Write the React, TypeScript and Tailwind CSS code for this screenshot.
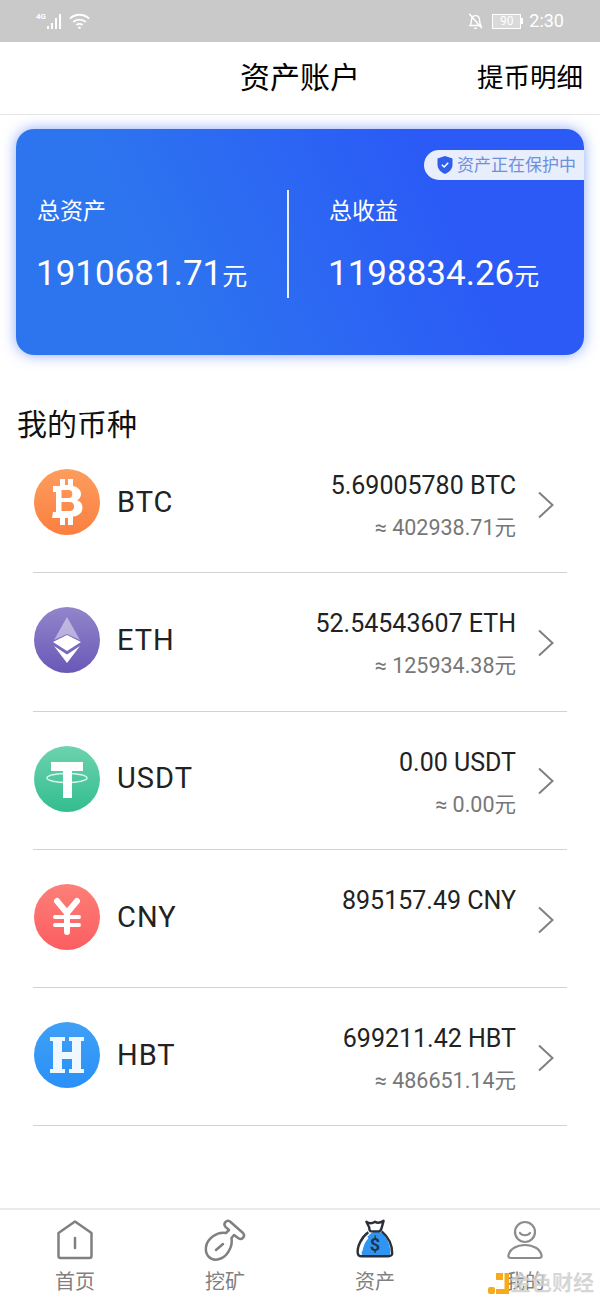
import React from 'react';

const FONT = "font-['Roboto','Noto_Sans_CJK_SC',sans-serif]";

const BtcIcon = () => (
  <svg viewBox="0 0 66 66" className="h-[66px] w-[66px]">
    <defs>
      <linearGradient id="btc" x1="0" y1="0" x2="0" y2="1">
        <stop offset="0" stopColor="#fd9d5e" />
        <stop offset="1" stopColor="#fb7f3f" />
      </linearGradient>
    </defs>
    <circle cx="33" cy="33" r="33" fill="url(#btc)" />
    <path
      fill="#fff"
      fillRule="evenodd"
      d="M26 10h5v6h3v-6h5v7c5 1 8 4 8 8 0 3-1.500 5-4 6.200 3.200 1 5.500 3.500 5.500 7.300 0 5-3.500 8.500-9.500 9V56h-5v-7h-3v7h-5v-7h-8l1-6h3V23h-3v-6h7Zm1.500 11v8H35c2 0 3.300-1.500 3.300-4s-1.300-4-3.300-4Zm0 12v9H36c2.500 0 4-1.700 4-4.500S38.500 33 36 33Z"
    />
  </svg>
);

const EthIcon = () => (
  <svg viewBox="0 0 66 66" className="h-[66px] w-[66px]">
    <defs>
      <linearGradient id="eth" x1="0" y1="0" x2="0" y2="1">
        <stop offset="0" stopColor="#9286cb" />
        <stop offset="1" stopColor="#6a58b7" />
      </linearGradient>
    </defs>
    <circle cx="33" cy="33" r="33" fill="url(#eth)" />
    <path fill="#fff" fillOpacity="0.45" d="M33 10 46 33 33 27 20 33Z" />
    <path fill="#fff" d="M33 28 47 35 33 44 19 35Z" />
    <path fill="#fff" d="M20 39 33 47.500 46 39 33 56Z" />
  </svg>
);

const UsdtIcon = () => (
  <svg viewBox="0 0 66 66" className="h-[66px] w-[66px]">
    <defs>
      <linearGradient id="usdt" x1="0" y1="0" x2="0" y2="1">
        <stop offset="0" stopColor="#6cd3ae" />
        <stop offset="1" stopColor="#33bd90" />
      </linearGradient>
    </defs>
    <circle cx="33" cy="33" r="33" fill="url(#usdt)" />
    <path fill="#fff" d="M17 16h32v9H38v27h-9V25H17Z" />
    <ellipse cx="33" cy="32" rx="20" ry="4.500" fill="none" stroke="#fff" strokeOpacity="0.8" strokeWidth="1.500" />
  </svg>
);

const CnyIcon = () => (
  <svg viewBox="0 0 66 66" className="h-[66px] w-[66px]">
    <defs>
      <linearGradient id="cny" x1="0" y1="0" x2="0" y2="1">
        <stop offset="0" stopColor="#fd7f78" />
        <stop offset="1" stopColor="#fb5e60" />
      </linearGradient>
    </defs>
    <circle cx="33" cy="33" r="33" fill="url(#cny)" />
    <path
      fill="none"
      stroke="#fff"
      strokeWidth="6"
      strokeLinecap="round"
      strokeLinejoin="round"
      d="M23 17 33 29 43 17M33 29v19"
    />
    <path fill="none" stroke="#fff" strokeWidth="4" strokeLinecap="round" d="M21 33h24M21 41h24" />
  </svg>
);

const HbtIcon = () => (
  <svg viewBox="0 0 66 66" className="h-[66px] w-[66px]">
    <defs>
      <linearGradient id="hbt" x1="0" y1="0" x2="0" y2="1">
        <stop offset="0" stopColor="#3fa0f5" />
        <stop offset="1" stopColor="#2a90f8" />
      </linearGradient>
    </defs>
    <circle cx="33" cy="33" r="33" fill="url(#hbt)" />
    <path
      fill="#f0f8ff"
      d="M16 15h15v4h-3v11h10V19h-3v-4h15v4h-3v28h3v4H35v-4h3V37H28v10h3v4H16v-4h3V19h-3Z"
    />
  </svg>
);

const Chevron = () => (
  <svg viewBox="0 0 18 28" className="h-7 w-[18px]" fill="none" stroke="#808080" strokeWidth="2">
    <path d="M2 1.500 15.500 14 2 26.500" />
  </svg>
);

const coins = [
  { icon: BtcIcon, name: 'BTC', amount: '5.69005780 BTC', cny: '≈ 402938.71元' },
  { icon: EthIcon, name: 'ETH', amount: '52.54543607 ETH', cny: '≈ 125934.38元' },
  { icon: UsdtIcon, name: 'USDT', amount: '0.00 USDT', cny: '≈ 0.00元' },
  { icon: CnyIcon, name: 'CNY', amount: '895157.49 CNY', cny: '' },
  { icon: HbtIcon, name: 'HBT', amount: '699211.42 HBT', cny: '≈ 486651.14元' },
];

const CoinRow = ({ icon: Icon, name, amount, cny }: (typeof coins)[number]) => (
  <div className="mx-[33px] flex h-[138.3px] items-center border-b border-[#d2d2d2] pb-[3px]">
    <div className="ml-px flex items-center">
      <Icon />
      <span className="ml-[17px] text-[29px] leading-none tracking-[1px] text-[#222]">{name}</span>
    </div>
    <div className="mr-[21px] ml-auto flex h-[100px] flex-col items-end pt-[16px]">
      <span className="text-[25px] leading-[36px] text-[#222]">{amount}</span>
      {cny && <span className="mt-[6px] text-[21.5px] leading-[36px] text-[#777]">{cny}</span>}
    </div>
    <div className="mr-[12px] mt-[5px]">
      <Chevron />
    </div>
  </div>
);

const TabItem = ({ label, children }: { label: string; children: React.ReactNode }) => (
  <div className="flex flex-1 flex-col items-center">
    <div className="h-[44px] w-[44px]">{children}</div>
    <span className="mt-[8px] text-[20px] leading-[24px] text-[#808080]">{label}</span>
  </div>
);

export default function App() {
  return (
    <div className={`relative flex h-[1300px] w-[600px] flex-col overflow-hidden bg-white ${FONT}`}>
      {/* status bar */}
      <div className="flex h-[42px] shrink-0 items-center bg-[#c9c9c9] pl-[36px] pr-[36px] text-white">
        <span className="mb-[9px] text-[8px] font-bold leading-none">4G</span>
        <svg viewBox="0 0 18 18" className="h-[18px] w-[18px]" fill="#fff">
          <rect x="1" y="14" width="2" height="3" />
          <rect x="5" y="11" width="2" height="6" />
          <rect x="9" y="6" width="2" height="11" />
          <rect x="13" y="2" width="2" height="15" />
        </svg>
        <svg viewBox="0 0 22 18" className="ml-[5px] h-[18px] w-[21px]" fill="none" stroke="#fff" strokeWidth="2">
          <path d="M1 6.500C6.500 1 15.500 1 21 6.500M4.500 10C8 6.800 14 6.800 17.500 10M7.800 13.200C9.500 11.800 12.500 11.800 14.200 13.200" />
          <circle cx="11" cy="16" r="1.300" fill="#fff" stroke="none" />
        </svg>
        <svg viewBox="0 0 18 20" className="ml-auto h-[18px] w-[17px]" fill="none" stroke="#fff" strokeWidth="1.600">
          <path d="M3 15c1.500-2 1.500-4 1.500-6 0-3 2-5 4.500-5s4.500 2 4.500 5c0 2 0 4 1.500 6ZM2 2l14 16M7.500 18h3" />
        </svg>
        <div className="ml-[8px] flex h-[15px] w-[29px] items-center justify-center border border-white bg-white/30 text-[12px] leading-none">
          90
        </div>
        <div className="mr-[6px] h-[6px] w-[2px] bg-white" />
        <span className="text-[18px] leading-none">2:30</span>
      </div>

      {/* header */}
      <div className="relative flex h-[73px] shrink-0 items-center justify-center border-b border-[#e6e6e6] text-black">
        <span className="text-[30px] leading-none">资产账户</span>
        <span className="absolute right-[17px] top-[23px] text-[26.5px] leading-none">提币明细</span>
      </div>

      {/* total card */}
      <div className="relative mx-4 mt-[14px] flex h-[226px] shrink-0 items-center rounded-[18px] bg-[linear-gradient(65deg,#2d75ef_25%,#2b5af6_75%)] shadow-[0_0_14px_rgba(50,100,240,0.55)] text-white">
        <div className="absolute right-0 top-[21px] flex h-[30px] items-center rounded-l-[15px] bg-[#e8eefb] pl-[13px] pr-[8px]">
          <svg viewBox="0 0 16 18" className="h-[18px] w-[16px]">
            <path fill="#2f5fe8" d="M8 0 15.500 2.500v6C15.500 13 12 16.500 8 18 4 16.500 .5 13 .5 8.500v-6Z" />
            <path fill="none" stroke="#fff" strokeWidth="1.500" d="M4.800 8.800 7.200 11 11.200 6.800" />
          </svg>
          <span className="ml-[4px] text-[17px] leading-none text-[#6e8fdb]">资产正在保护中</span>
        </div>
        <div className="flex-[0_0_271px] pl-[20px] pt-[12px]">
          <div className="ml-px text-[23px] leading-none">总资产</div>
          <div className="mt-[31px] whitespace-nowrap text-[35px] leading-[40px]">
            1910681.71<span className="text-[25px]">元</span>
          </div>
        </div>
        <div className="mt-[3px] h-[108px] w-[2px] bg-white/90" />
        <div className="pl-[39px] pt-[12px]">
          <div className="ml-px text-[23px] leading-none">总收益</div>
          <div className="mt-[31px] whitespace-nowrap text-[35px] leading-[40px]">
            1198834.26<span className="text-[25px]">元</span>
          </div>
        </div>
      </div>

      {/* coins */}
      <div className="mt-[52px] pl-[17px] text-[30px] leading-[36px] text-[#111]">我的币种</div>
      <div className="-mt-[8px] flex flex-col">
        {coins.map((c) => (
          <CoinRow key={c.name} {...c} />
        ))}
      </div>

      {/* tab bar */}
      <div className="absolute inset-x-0 bottom-0 flex h-[92px] border-t-2 border-[#eaeaea] pt-[8px]">
        <TabItem label="首页">
          <svg viewBox="0 0 44 44" fill="none" stroke="#808080" strokeWidth="2.500" strokeLinejoin="round">
            <path d="M22 3.500 38.500 15v23a2 2 0 0 1-2 2h-29a2 2 0 0 1-2-2V15Z" />
            <path d="M22 20v10" strokeLinecap="round" />
          </svg>
        </TabItem>
        <TabItem label="挖矿">
          <svg viewBox="0 0 44 44" fill="none" stroke="#808080" strokeWidth="2.500" strokeLinejoin="round" strokeLinecap="round">
            <path d="M26 12 22.500 8.800a3.500 3.500 0 0 1 4.500-5.300L40 15a3.500 3.500 0 0 1-4.500 5.300L31 17l-2.500 3c1.500 8-4 20-14 21.500C7 42.500 2 37 3 29c1-8 11-16 20-14Z" />
            <path d="M13 32 20 26" />
          </svg>
        </TabItem>
        <TabItem label="资产">
          <svg viewBox="-1 0 46 46">
            <path fill="#2f95f5" d="M22 14c9-1 16 11 16 22 0 3-1 4-4 4H12c-2 0-4-1-4-3 0-10 6-21 14-23Z" />
            <path fill="none" stroke="#2a2f3a" strokeWidth="2.500" strokeLinejoin="round" d="M13 4c3 2 6 2 9 0 3 2 6 1 9-1l-2 7c-.5 3-1 4-3 4H18c-2 0-2-2-2-4ZM15 15C8 20 3 30 4 37c.3 2 2 3 4 3h28c3 0 4-2 4-3 0-8-4-17-11-23" />
            <path fill="none" stroke="#fff" strokeWidth="2" strokeLinecap="round" d="M14 21c-3 3-5 8-6 13" />
            <text x="22" y="35" textAnchor="middle" fontSize="19" fontWeight="700" fill="#1e3650">$</text>
          </svg>
        </TabItem>
        <TabItem label="我的">
          <svg viewBox="0 0 44 44" fill="none" stroke="#8c8c8c" strokeWidth="2.200" strokeLinecap="round">
            <circle cx="22" cy="14" r="10" />
            <path d="M17 15c2 3 8 3 10 0" />
            <path d="M8 40c-2 0-3-1-2.500-3 1.500-6 8-10 16.500-10s15 4 16.500 10c.5 2-.5 3-2.500 3Z" />
          </svg>
        </TabItem>
      </div>

      {/* watermark */}
      <div className="absolute bottom-[6px] right-[6px] flex items-center">
        <svg viewBox="0 0 21 21" className="h-[21px] w-[21px]" fill="#f5ab1c">
          <rect x="8" y="0" width="7" height="7" />
          <rect x="0" y="14" width="7" height="7" rx="2" />
          <path d="M16.500 0H21v21H8v-5h8.500Z" />
        </svg>
        <span className="ml-px text-[21px] font-bold leading-none text-[#cfcfcf]/85">金色财经</span>
      </div>
    </div>
  );
}
